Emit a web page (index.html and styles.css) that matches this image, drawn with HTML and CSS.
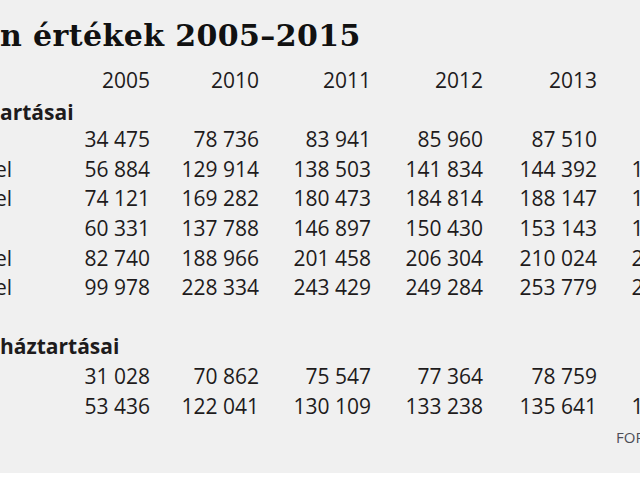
FILE: index.html
```html
<!DOCTYPE html>
<html lang="hu">
<head>
<meta charset="utf-8">
<link rel="stylesheet" href="styles.css">
</head>
<body>
<div class="panel">
  <h1 class="title">n értékek 2005–2015</h1>
  <div class="table">
    <div class="row head"><span class="label"></span><span>2005</span><span>2010</span><span>2011</span><span>2012</span><span>2013</span><span>2014</span></div>
    <div class="row section first"><span class="label strong">artásai</span></div>
    <div class="row"><span class="label"></span><span>34 475</span><span>78 736</span><span>83 941</span><span>85 960</span><span>87 510</span><span>89 330</span></div>
    <div class="row"><span class="label cut">el</span><span>56 884</span><span>129 914</span><span>138 503</span><span>141 834</span><span>144 392</span><span>147 390</span></div>
    <div class="row"><span class="label cut">el</span><span>74 121</span><span>169 282</span><span>180 473</span><span>184 814</span><span>188 147</span><span>192 055</span></div>
    <div class="row"><span class="label"></span><span>60 331</span><span>137 788</span><span>146 897</span><span>150 430</span><span>153 143</span><span>156 323</span></div>
    <div class="row"><span class="label cut">el</span><span>82 740</span><span>188 966</span><span>201 458</span><span>206 304</span><span>210 024</span><span>214 385</span></div>
    <div class="row"><span class="label cut">el</span><span>99 978</span><span>228 334</span><span>243 429</span><span>249 284</span><span>253 779</span><span>259 049</span></div>
    <div class="row blank"></div>
    <div class="row section"><span class="label strong">háztartásai</span></div>
    <div class="row"><span class="label"></span><span>31 028</span><span>70 862</span><span>75 547</span><span>77 364</span><span>78 759</span><span>80 395</span></div>
    <div class="row"><span class="label"></span><span>53 436</span><span>122 041</span><span>130 109</span><span>133 238</span><span>135 641</span><span>138 457</span></div>
    <div class="row source"><span class="src">FORRÁS: KSH</span></div>
  </div>
</div>
</body>
</html>
```
FILE: styles.css
```css
html, body {
  margin: 0;
  padding: 0;
  background: #ffffff;
}
body {
  width: 640px;
  height: 480px;
  overflow: hidden;
}
.panel {
  width: 640px;
  height: 473px;
  background: #f0f0f0;
  overflow: hidden;
  box-sizing: border-box;
  padding-top: 19px;
  color: #1e1b1c;
}
.title {
  margin: 0;
  font-family: "DejaVu Serif", "Liberation Serif", serif;
  font-weight: bold;
  font-size: 30px;
  line-height: 34px;
  white-space: nowrap;
  letter-spacing: 0.4px;
  color: #111;
}
.table {
  margin-top: 13px;
  width: 760px;
  font-family: "Open Sans", "Noto Sans", sans-serif;
  font-size: 21px;
}
.row {
  display: grid;
  grid-template-columns: 40px 110px 109px 112px 112px 114px 112px;
  height: 29.6px;
  line-height: 29.6px;
  white-space: nowrap;
}
.row > span {
  text-align: right;
}
.row > .label {
  text-align: left;
}
.row > .cut {
  margin-left: -5px;
}
.section .label {
  grid-column: 1 / -1;
  line-height: 28px;
}
.section.first .label {
  padding-top: 2px;
}
.strong {
  font-weight: bold;
}
.source .src {
  grid-column: 7;
  text-align: left;
  padding-left: 19px;
  padding-top: 2px;
  font-size: 15px;
  color: #4d4d57;
}
```
